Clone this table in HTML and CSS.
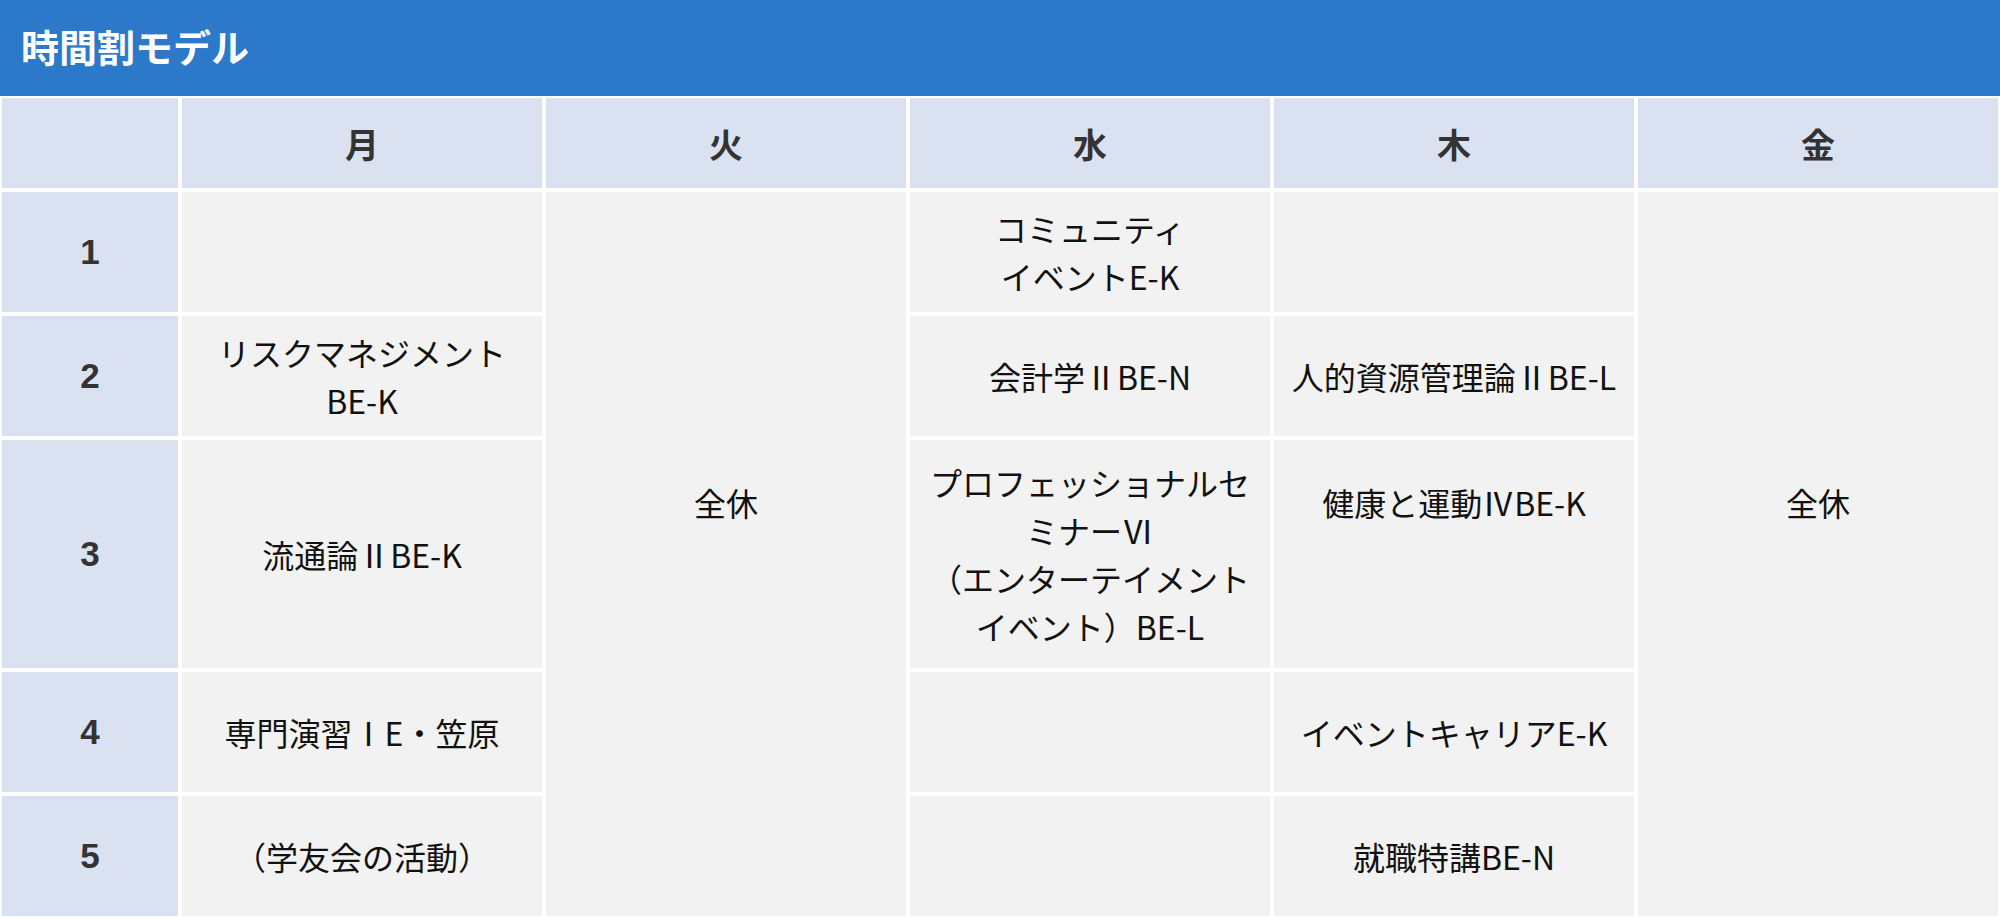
FILE: index.html
```html
<!DOCTYPE html>
<html lang="ja">
<head>
  <meta charset="UTF-8">
  <meta name="viewport" content="width=device-width, initial-scale=1.0">
  <title>時間割モデル</title>
  <link rel="stylesheet" href="styles.css">
</head>
<body>
  <div class="title-bar">時間割モデル</div>
  <table class="timetable">
    <tr class="head">
      <th class="period"></th>
      <th>月</th>
      <th>火</th>
      <th>水</th>
      <th>木</th>
      <th>金</th>
    </tr>
    <tr>
      <th class="period">1</th>
      <td></td>
      <td rowspan="5"><div class="lift">全休</div></td>
      <td>コミュニティ<br>イベントE-K</td>
      <td></td>
      <td rowspan="5"><div class="lift">全休</div></td>
    </tr>
    <tr>
      <th class="period">2</th>
      <td>リスクマネジメントBE-K</td>
      <td>会計学ⅡBE-N</td>
      <td>人的資源管理論ⅡBE-L</td>
    </tr>
    <tr class="tall">
      <th class="period">3</th>
      <td>流通論ⅡBE-K</td>
      <td>プロフェッショナルセミナーⅥ<br>（エンターテイメント<br>イベント）BE-L</td>
      <td><div class="lift">健康と運動ⅣBE-K</div></td>
    </tr>
    <tr>
      <th class="period">4</th>
      <td>専門演習ⅠE・笠原</td>
      <td></td>
      <td>イベントキャリアE-K</td>
    </tr>
    <tr>
      <th class="period">5</th>
      <td>（学友会の活動）</td>
      <td></td>
      <td>就職特講BE-N</td>
    </tr>
  </table>
</body>
</html>
```

FILE: styles.css
```css
body {
  margin: 0;
  background-color: #fff;
  font-family: "Noto Sans CJK JP", "Noto Sans", sans-serif;
  color: #111;
}
.title-bar {
  height: 91px;
  display: flex;
  align-items: center;
  padding: 0 0 5px 21px;
  background-color: #2d79c9;
  color: #fff;
  font-size: 38px;
  font-weight: bold;
}
.timetable {
  width: 2000px;
  border-collapse: separate;
  border-spacing: 0;
  table-layout: fixed;
}
.timetable th,
.timetable td {
  border: 2px solid #fff;
  padding: 0 12px;
  text-align: center;
  vertical-align: middle;
  height: 120px;
}
.timetable td {
  background-color: #f2f2f2;
  font-size: 32px;
  line-height: 48px;
}
.timetable th {
  background-color: #dae1f0;
  color: #333;
  font-family: "Liberation Sans", "Noto Sans CJK JP", sans-serif;
  font-size: 34px;
  font-weight: bold;
}
.timetable .period {
  width: 152px;
  font-size: 35px;
}
.timetable .head th {
  height: 90px;
}
.timetable .tall td,
.timetable .tall th {
  height: 228px;
}
.lift {
  margin-bottom: 104px;
}
```
